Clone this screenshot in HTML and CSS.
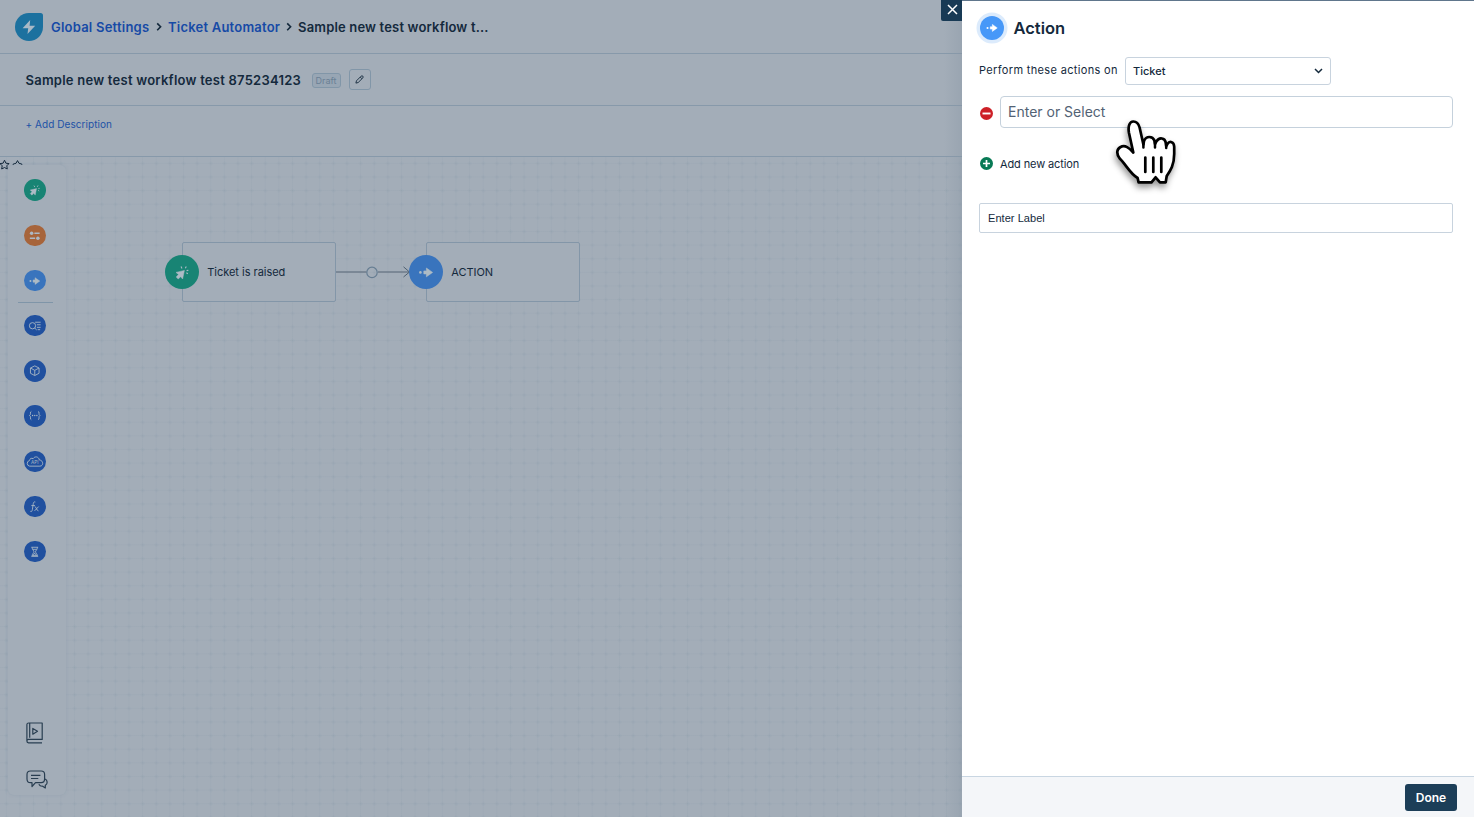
FILE: index.html
```html
<!DOCTYPE html>
<html lang="en">
<head>
<meta charset="utf-8">
<title>Ticket Automator</title>
<link rel="stylesheet" href="styles.css">
</head>
<body>
<svg class="defs" width="0" height="0">
  <symbol id="trigger" viewBox="0 0 34 34">
    <path d="M11 17.4 19.4 15.4 17.6 24 15.7 21.7 13.2 24 11.2 22 13.5 19.5Z" fill="currentColor" stroke="currentColor" stroke-width=".5" stroke-linejoin="round"/>
    <path d="M17 13.4 16 11.6M20.3 13.2 21.3 11.4M21.6 15.6 23.4 15.2M21.4 17.8 22.8 18.7" stroke="currentColor" stroke-width="1.1" fill="none"/>
  </symbol>
  <symbol id="arrow" viewBox="0 0 34 34">
    <path d="M17.4 13V15.9H14.8V18.9H17.4V21.8L23.6 17.4Z" fill="currentColor" stroke="currentColor" stroke-width=".6" stroke-linejoin="round"/>
    <circle cx="11.4" cy="17.4" r="1.3" fill="currentColor"/>
  </symbol>
</svg>
<div class="app">
  <main class="workspace">
    <header class="crumbs">
      <svg class="logo" viewBox="0 0 28 28"><path d="M14 0H25.5Q28 0 28 2.5V14A14 14 0 1 1 14 0Z" fill="#1c719f"/><path d="M15.2 7 7.6 15.2H13.2L12.5 21 20.2 12.7H14.6Z" fill="#a9b9c6"/></svg>
      <a class="crumb first">Global Settings</a>
      <svg class="chev" viewBox="0 0 6 10"><path d="M1.2 1.4 4.6 4.8 1.2 8.2"/></svg>
      <a class="crumb second">Ticket Automator</a>
      <svg class="chev" viewBox="0 0 6 10"><path d="M1.2 1.4 4.6 4.8 1.2 8.2"/></svg>
      <span class="crumb current">Sample new test workflow t...</span>
    </header>
    <section class="title-row">
      <h1 class="title">Sample new test workflow test 875234123</h1>
      <span class="draft">Draft</span>
      <button class="edit"><svg viewBox="0 0 10 10"><path d="M1 9 1.6 6.5 6.8 1.3A1.2 1.2 0 0 1 8.7 3.2L3.5 8.4ZM5.8 2.3 7.7 4.2"/></svg></button>
    </section>
    <section class="desc-row"><a class="add-desc">+ Add Description</a></section>
    <section class="canvas">
      <svg class="stars" viewBox="0 0 24 14"><path d="M4.5 3.2 5.9 6.2 9 6.6 6.8 8.8 7.3 12 4.5 10.5 1.7 12 2.2 8.8 0 6.6 3.1 6.2Z"/><path d="M13.2 8.2V7L16 6.3 17.5 3.6 19 6.3 21.8 7V8.2"/></svg>
      <nav class="rail">
        <div class="group basics">
          <span class="tool green"><svg viewBox="3 3 28 28"><use href="#trigger" width="34" height="34"/></svg></span>
          <span class="tool orange"><svg viewBox="0 0 22 22"><g fill="currentColor" stroke="none"><circle cx="7.8" cy="8.4" r="1.8"/><circle cx="14.2" cy="13.5" r="1.8"/></g><path class="thick" d="M10.6 8.4H16M6 13.5H11.4"/></svg></span>
          <span class="tool blue"><svg viewBox="3 3 28 28"><use href="#arrow" width="34" height="34"/></svg></span>
        </div>
        <div class="group">
          <span class="tool navy"><svg viewBox="0 0 22 22"><circle cx="8.7" cy="11" r="3.2"/><path d="M11 13.4 13 15.3M11.4 7.4H17M13.2 10H17M13.2 12.6H17M14 15H16.5"/></svg></span>
          <span class="tool navy"><svg viewBox="0 0 22 22"><path d="M11 6 15.4 8.2V13.6L11 15.9 6.6 13.6V8.2ZM6.8 8.3 11 10.6 15.2 8.3M11 10.6V15.7"/></svg></span>
          <span class="tool navy"><svg viewBox="0 0 22 22"><path d="M7.5 6.6C5.8 6.6 7.5 10.2 5.7 10.7 7.5 11.2 5.8 15.1 7.5 15.1M14.5 6.6C16.2 6.6 14.5 10.2 16.3 10.7 14.5 11.2 16.2 15.1 14.5 15.1"/><g fill="currentColor" stroke="none"><circle cx="8.8" cy="10.8" r=".7"/><circle cx="11" cy="10.8" r=".7"/><circle cx="13.2" cy="10.8" r=".7"/></g></svg></span>
          <span class="tool navy"><svg viewBox="0 0 22 22"><path d="M5.8 15.5A2.9 2.9 0 0 1 5.6 9.8Q6.3 6.6 9.4 7.8C11 5 15.2 5.6 15.7 9.2 20 9.4 20.2 15.5 16.3 15.5Z"/><text class="api" x="11" y="13.7">API</text></svg></span>
          <span class="tool navy"><svg viewBox="0 0 22 22"><path d="M11.6 6.2C9.9 5.4 9.6 7 9.3 9L8.6 13.8C8.3 15.6 7.8 16.3 6.5 15.7M7.5 9.8H11.2M11 10.8C12.6 10.8 12.8 15.2 14.8 15.2M15 10.8 10.8 15.2"/></svg></span>
          <span class="tool navy"><svg viewBox="0 0 22 22"><path d="M7.5 6.4H14.5M7.5 15.7H14.5M8.3 6.5C8.3 9 10.2 9.8 10.2 11S8.3 13 8.3 15.5M13.7 6.5C13.7 9 11.8 9.8 11.8 11S13.7 13 13.7 15.5M9.2 8.5H12.8M11 12.5 9 15H13Z"/></svg></span>
        </div>
        <div class="help">
          <svg class="book" viewBox="0 0 18 22"><path d="M2.8 1H16.2V17.4H2.5Q.9 17.5.9 19.1T2.5 20.8H16M.9 19V2.5Q.9 1 2.8 1M3.7 1.5V15.8"/><path d="M6.8 6.4V12.2L11.5 9.3Z"/></svg>
          <svg class="chat" viewBox="0 0 22 20"><path d="M4.5 1H15.2Q18.6 1 18.6 4.4V9.1Q18.6 12.7 15.2 12.7H9.5L6 16.5V12.7H4.5Q1 12.7 1 9.1V4.4Q1 1 4.5 1ZM5 5.3H14.4M5 8.5H12.3"/><path d="M19 9C21.6 10 22 14 19.3 15.4V18L16.7 16.2C15 16.4 13.5 15.5 12.8 14.2"/></svg>
        </div>
      </nav>
      <div class="node start"><svg class="badge green"><use href="#trigger"/></svg><span>Ticket is raised</span></div>
      <svg class="link" viewBox="0 0 76 16"><path d="M0 8H30.5M42 8H73.5" stroke="#6f7c8a" stroke-width="1.5"/><circle cx="36" cy="8.4" r="5.2" stroke="#667d92" stroke-width="1.2"/><path d="M67.5 2.8 73.5 8 67.5 13" stroke="#4e6071" stroke-width="1"/></svg>
      <div class="node action"><svg class="badge blue"><use href="#arrow"/></svg><span>ACTION</span></div>
    </section>
    <button class="close"><svg viewBox="0 0 11 11"><path d="M1 1 10 10M10 1 1 10"/></svg></button>
  </main>
  <aside class="panel">
    <header class="panel-head"><svg class="panel-icon" viewBox="2 2.5 30 30"><use href="#arrow" width="34" height="34"/></svg><h2>Action</h2></header>
    <div class="target"><label>Perform these actions on</label>
      <div class="select"><span>Ticket</span><svg viewBox="0 0 9 6"><path d="M1 1 4.5 4.5 8 1"/></svg></div></div>
    <div class="action-row"><svg class="dot" viewBox="0 0 13 13"><circle cx="6.5" cy="6.5" r="6.5" fill="#cd2027"/><path d="M2.5 6.5H10.5" stroke="#fff" stroke-width="1.9"/></svg>
      <div class="entry">Enter or Select</div></div>
    <div class="add-row"><svg class="dot" viewBox="0 0 13 13"><circle cx="6.5" cy="6.5" r="6.5" fill="#087a55"/><path d="M3 6.5H10M6.5 3V10" stroke="#fff" stroke-width="1.7"/></svg><span>Add new action</span></div>
    <div class="label-field">Enter Label</div>
    <footer class="panel-foot"><button class="done">Done</button></footer>
    <svg class="hand" viewBox="0 0 62 66"><path d="M18.3 34.5 14 15C12.6 7.5 15 3.6 18.2 3.5 21.6 3.4 23.6 6 24.6 9.5L28.4 26.5 29 23C31.2 17.5 37.6 18 39.4 22.5L40 26 41.3 23.6C44.3 18.6 50 20 50.7 24.5L51.2 28 52.4 26C54.8 22.6 59 23.6 59.2 28.8V36C59.2 47 55.5 52.4 51.7 58L50.7 64.4H45L40.6 59.3 36.5 64.4H23.6L22.6 60C14.5 55 11 46.5 4.7 40.5 .9 35.5 2 31 5.2 29.2 10.2 26.4 14.2 30 18.3 34.5Z" fill="#fff" stroke="#000" stroke-width="2.7" stroke-linejoin="round"/><path d="M30.3 39.5V54M38.3 39.5V54M46.3 39.5V54" fill="none" stroke="#000" stroke-width="2.7" stroke-linecap="round"/><path d="M28.4 23V29.5M40 23V29.5M51.2 25V30" fill="none" stroke="#000" stroke-width="2.5" stroke-linecap="round"/></svg>
  </aside>
</div>
</body>
</html>
```
FILE: styles.css
```css
* { box-sizing: border-box; }
body { margin: 0; font-family: Inter, "Liberation Sans", sans-serif; color: #14293c; overflow: hidden; }
svg { display: block; flex: none; overflow: visible; }
.defs { position: absolute; }
button { font: inherit; padding: 0; border: 0; }
h1, h2 { margin: 0; }
.app { display: flex; width: 1474px; height: 817px; }

.workspace { position: relative; width: 962px; display: flex; flex-direction: column; background: #a3adb8; }
.workspace::after { content: ""; position: absolute; inset: 0 0 0 auto; width: 18px; background: linear-gradient(90deg, #8997a500, #8997a560); pointer-events: none; }
.crumbs { height: 54px; display: flex; align-items: center; padding-left: 15px; border-bottom: 1px solid #8799aa; }
.logo { width: 28px; height: 28px; }
.crumb { font-size: 13px; font-weight: 600; line-height: 18px; letter-spacing: .22px; white-space: nowrap; color: #164aa6; }
.first { margin-left: 8px; width: 99px; }
.second { width: 112px; }
.current { color: #14293c; letter-spacing: .17px; }
.chev { width: 6px; height: 10px; margin: 0 6px 0 6px; fill: none; stroke: #14293c; stroke-width: 1.6; }
.title-row { height: 52px; display: flex; align-items: center; padding-left: 25.5px; border-bottom: 1px solid #8799aa; }
.title { width: 286px; font-size: 13px; font-weight: 600; line-height: 18px; letter-spacing: .24px; white-space: nowrap; }
.draft { width: 29px; height: 15px; margin-top: 2px; border: 1px solid #8196a8; border-radius: 3px; background: #98a6b4; color: #6a8094; font-size: 9px; line-height: 13px; text-align: center; }
.edit { width: 22px; height: 21px; margin-left: 8px; display: grid; place-items: center; background: none; border: 1px solid #8196a8; border-radius: 3px; }
.edit svg { width: 9px; height: 9px; fill: none; stroke: #14293c; stroke-width: 1; }
.desc-row { height: 51px; padding: 11px 0 0 25.5px; border-bottom: 1px solid #8799aa; }
.add-desc { font-size: 10px; line-height: 14px; letter-spacing: .06px; color: #2152a6; display: block; }

.canvas { position: relative; flex: 1;
  background-image: radial-gradient(circle at 6.5px 6.5px, #91a0ae70 0, #91a0ae00 2.5px), linear-gradient(#98a5b200 6px, #98a5b250 6px, #98a5b250 7px, #98a5b200 7px), linear-gradient(90deg, #98a5b200 6px, #98a5b250 6px, #98a5b250 7px, #98a5b200 7px);
  background-size: 13.63px 13.63px; background-position: 0 0; }
.stars { position: absolute; left: 0; top: 0; width: 24px; height: 14px; fill: none; stroke: #14293c; stroke-width: 1; }
.rail { position: absolute; left: 8px; top: 8px; width: 58px; height: 630px; padding: 14.4px 4px 0 0; display: flex; flex-direction: column; align-items: center; background: #a3adb8; border-radius: 6px; box-shadow: 0 0 3px #899bab80; }
.group { width: 35px; display: flex; flex-direction: column; align-items: center; gap: 23.7px; }
.basics { padding-bottom: 10.7px; border-bottom: 1px solid #7f95a8; margin-bottom: 12px; }
.tool { width: 21.5px; height: 21.5px; border-radius: 50%; color: #acb9c5; }
.tool svg { width: 21.5px; height: 21.5px; fill: none; stroke: currentColor; stroke-width: .9; }
.tool use { stroke: none; }
.tool .thick { stroke-width: 1.5; }
.tool .api { font-size: 4.8px; text-anchor: middle; fill: currentColor; stroke: none; }
.green { background: #188474; color: #adbbc5; }
.orange { background: #a7643a; }
.blue { background: #3974bd; color: #adbbc5; }
.navy { background: #20509f; }
.help { margin: auto 0 5px 4px; display: flex; flex-direction: column; gap: 26px; }
.help svg { fill: none; stroke: #293e51; stroke-width: 1.2; stroke-linejoin: round; }
.book { width: 18px; height: 22px; }
.chat { width: 22px; height: 20px; }
.node { position: absolute; top: 85px; width: 154px; height: 60px; display: flex; align-items: center; background: #a3adb8; border: 1px solid #8396a8; border-radius: 2px; font-size: 11px; letter-spacing: -.02px; }
.start { left: 182px; }
.action { left: 426px; }
.badge { width: 34px; height: 34px; border-radius: 50%; margin-left: -17.8px; margin-right: 8px; }
.link { position: absolute; left: 336px; top: 107px; width: 76px; height: 16px; fill: none; }
.close { position: absolute; z-index: 2; left: 941px; top: 0; width: 21px; height: 21px; background: #183a55; border-radius: 0 0 0 2px; display: grid; place-items: center; }
.close svg { width: 11px; height: 11px; margin-top: -2px; margin-left: 2px; stroke: #fff; stroke-width: 1.5; }

.panel { position: relative; width: 512px; display: flex; flex-direction: column; background: #fff; border-top: 1.5px solid #60768c; }
.panel-head { height: 56px; display: flex; padding: 15px 0 0 17.5px; gap: 10px; }
.panel-icon { width: 24px; height: 24px; border-radius: 50%; background: #4798f8; color: #fff; box-shadow: 0 0 0 3.5px #dcebfc; }
.panel-head h2 { font-size: 16.5px; font-weight: 560; line-height: 25px; }
.target { display: flex; padding-left: 17px; height: 39px; font-size: 11px; }
.target label { width: 146px; line-height: 26px; letter-spacing: .34px; white-space: nowrap; }
.select { width: 206px; height: 28px; border: 1px solid #c8d3de; border-radius: 3px; display: flex; align-items: center; justify-content: space-between; padding: 0 7px 0 7px; font-weight: 500; }
.select svg { width: 9px; height: 6px; fill: none; stroke: #14293c; stroke-width: 1.5; }
.action-row { display: flex; height: 32px; padding-left: 18px; align-items: center; gap: 7px; }
.dot { width: 13px; height: 13px; }
.action-row .dot { margin-top: 3px; }
.entry { width: 452.5px; height: 32px; border: 1px solid #c5d1dc; border-radius: 4px; padding-left: 7px; font-size: 14px; line-height: 30px; color: #526274; }
.add-row { display: flex; align-items: center; gap: 7px; height: 14px; margin: 28.5px 0 32.5px 18px; font-size: 11px; letter-spacing: -.12px; }
.label-field { width: 474px; height: 30px; margin-left: 17px; padding-left: 8px; border: 1px solid #c8d3de; border-radius: 2px; font: 11px/28px "Liberation Sans", sans-serif; letter-spacing: .05px; }
.panel-foot { margin-top: auto; height: 41px; display: flex; justify-content: flex-end; padding: 7px 17px 0 0; border-top: 1px solid #c9d6e2; background: #f4f6f9; }
.done { width: 52px; height: 27px; background: #1c3e58; color: #fff; border-radius: 3px; font-size: 12px; font-weight: 560; }
.hand { position: absolute; left: 153px; top: 117px; width: 62px; height: 66px; filter: drop-shadow(-1px 4px 3px #0006); }
```
